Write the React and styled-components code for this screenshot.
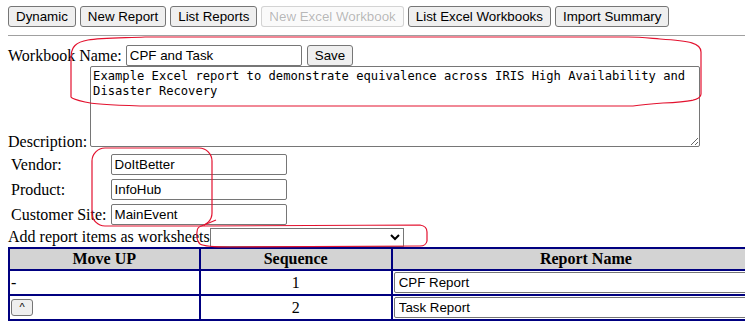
import React from "react";
import styled, { createGlobalStyle } from "styled-components";

const GlobalStyle = createGlobalStyle`
  html, body {
    margin: 0;
    overflow: hidden;
    background: #fff;
  }
  body {
    font-family: "Liberation Serif", "Times New Roman", serif;
    font-size: 16px;
    color: #000;
  }
`;

const reports = [
  { seq: 1, name: "CPF Report", first: true },
  { seq: 2, name: "Task Report", first: false },
];

const vendorFields = [
  { label: "Vendor:", value: "DoItBetter" },
  { label: "Product:", value: "InfoHub" },
  { label: "Customer Site:", value: "MainEvent" },
];

function App() {
  return (
    <Page>
      <GlobalStyle />
      <Toolbar>
        <Button>Dynamic</Button>
        <Button>New Report</Button>
        <Button>List Reports</Button>
        <Button disabled>New Excel Workbook</Button>
        <Button>List Excel Workbooks</Button>
        <Button>Import Summary</Button>
      </Toolbar>
      <Rule />

      <FieldRow>
        <Label>Workbook Name:</Label>
        <TextInput defaultValue="CPF and Task" />
        <Button>Save</Button>
      </FieldRow>

      <DescRow>
        <Label>Description:</Label>
        <Textarea
          defaultValue="Example Excel report to demonstrate equivalence across IRIS High Availability and Disaster Recovery"
        />
      </DescRow>

      <InfoTable>
        <tbody>
          {vendorFields.map((f) => (
            <tr key={f.label}>
              <td>{f.label}</td>
              <td>
                <TextInput defaultValue={f.value} />
              </td>
            </tr>
          ))}
        </tbody>
      </InfoTable>

      <AddRow>
        <Label>Add report items as worksheets</Label>
        <Select defaultValue="">
          <option value=""></option>
        </Select>
      </AddRow>

      <ReportTable>
        <thead>
          <tr>
            <Th $w={190}>Move UP</Th>
            <Th $w={191}>Sequence</Th>
            <Th $w={392}>Report Name</Th>
          </tr>
        </thead>
        <tbody>
          {reports.map((r) => (
            <tr key={r.seq}>
              <Td>{r.first ? "-" : <MoveButton>^</MoveButton>}</Td>
              <Td $center>{r.seq}</Td>
              <Td>
                <NameInput defaultValue={r.name} />
              </Td>
            </tr>
          ))}
        </tbody>
      </ReportTable>

      {/* red hand-drawn highlights */}
      <Marks width="745" height="335" viewBox="0 0 745 335">
        <path d="M71 97 L71 57 C71 47 76 42 88 40 C100 38 120 38 145 37 L628 37 C640 37 648 38 660 39 C690 41 701 43 701 52 L701 94 C701 100 690 102 663 103 C650 104 640 105 633 106 L140 106 C110 105 92 104 85 102 C76 100 72 99 71 97 Z" />
        <rect x="92" y="148" width="120" height="78" rx="13" ry="13" />
        <path d="M216 220 L204 225 M203 226 L420 225 Q427 226 427 232 L427 241 Q426 246 420 246 L230 247 Q205 247 200 244 Q196 240 197 232 Q197 226 203 226" />
      </Marks>
    </Page>
  );
}

const Page = styled.div`
  position: relative;
  width: 790px;
  padding: 6px 0 0 8px;
`;

const Toolbar = styled.div`
  display: flex;
  gap: 4px;
`;

const Button = styled.button`
  height: 21px;
  padding: 1px 7px;
  background: #efefef;
  border: 1px solid #767676;
  border-radius: 3px;
  font-family: "Liberation Sans", Arial, sans-serif;
  font-size: 13.33px;
  color: #000;

  &:disabled {
    color: rgba(16, 16, 16, 0.3);
    background: rgba(239, 239, 239, 0.3);
    border-color: rgba(118, 118, 118, 0.3);
  }
`;

const Rule = styled.div`
  margin: 8px 0 0;
  border-top: 1px solid #a0a0a0;
  margin-right: -50px;
`;

const Label = styled.span`
  white-space: nowrap;
  line-height: 18px;
`;

const FieldRow = styled.div`
  display: flex;
  align-items: center;
  gap: 4px;
  margin-top: 9px;
  height: 21px;

  button {
    margin-left: 1px;
  }
`;

const TextInput = styled.input`
  box-sizing: border-box;
  width: 176px;
  height: 21px;
  padding: 1px 3px;
  border: 1px solid #767676;
  border-radius: 2px;
  font-family: "Liberation Sans", Arial, sans-serif;
  font-size: 13.33px;
  color: #000;
`;

const DescRow = styled.div`
  display: flex;
  align-items: flex-end;
  gap: 3px;

  ${Label} {
    margin-bottom: -4px;
  }
`;

const Textarea = styled.textarea`
  box-sizing: border-box;
  width: 610px;
  height: 81px;
  padding: 2px;
  border: 1px solid #767676;
  border-radius: 2px;
  font-family: "DejaVu Sans Mono", "Liberation Mono", monospace;
  font-size: 12.15px;
  line-height: 15px;
  color: #000;
  resize: both;
`;

const InfoTable = styled.table`
  margin-top: 4px;
  border-spacing: 2px;

  td {
    padding: 1px;
    font-size: 16px;
    white-space: nowrap;
  }
`;

const AddRow = styled.div`
  display: flex;
  align-items: center;
  height: 20px;
  margin-top: -1px;
`;

const Select = styled.select`
  box-sizing: border-box;
  width: 194px;
  height: 19px;
  border: 1px solid #767676;
  border-radius: 0;
  background: #fff;
  font-family: "Liberation Sans", Arial, sans-serif;
  font-size: 13.33px;
`;

const ReportTable = styled.table`
  border-collapse: collapse;
  border: 2px solid #000080;
  width: 773px;
`;

const Th = styled.th`
  width: ${(p) => p.$w}px;
  padding: 1px;
  background: #d3d3d3;
  border: 2px solid #000080;
  font-weight: bold;
  font-size: 16px;
  line-height: 18px;
`;

const Td = styled.td`
  padding: 1px;
  border: 2px solid #000080;
  text-align: ${(p) => (p.$center ? "center" : "left")};
  vertical-align: middle;
  font-size: 16px;
`;

const MoveButton = styled.button`
  display: block;
  width: 22px;
  height: 17px;
  padding: 0;
  background: #efefef;
  border: 1px solid #767676;
  border-radius: 3px;
  font-family: "Liberation Sans", Arial, sans-serif;
  font-size: 11px;
  line-height: 13px;
  color: #000;
`;

const NameInput = styled(TextInput)`
  display: block;
  width: 100%;
  padding: 1px 4px;
`;

const Marks = styled.svg`
  position: absolute;
  left: 0;
  top: 0;
  pointer-events: none;
  fill: none;
  stroke: #e3122f;
  stroke-width: 1.2;
`;

export default App;
